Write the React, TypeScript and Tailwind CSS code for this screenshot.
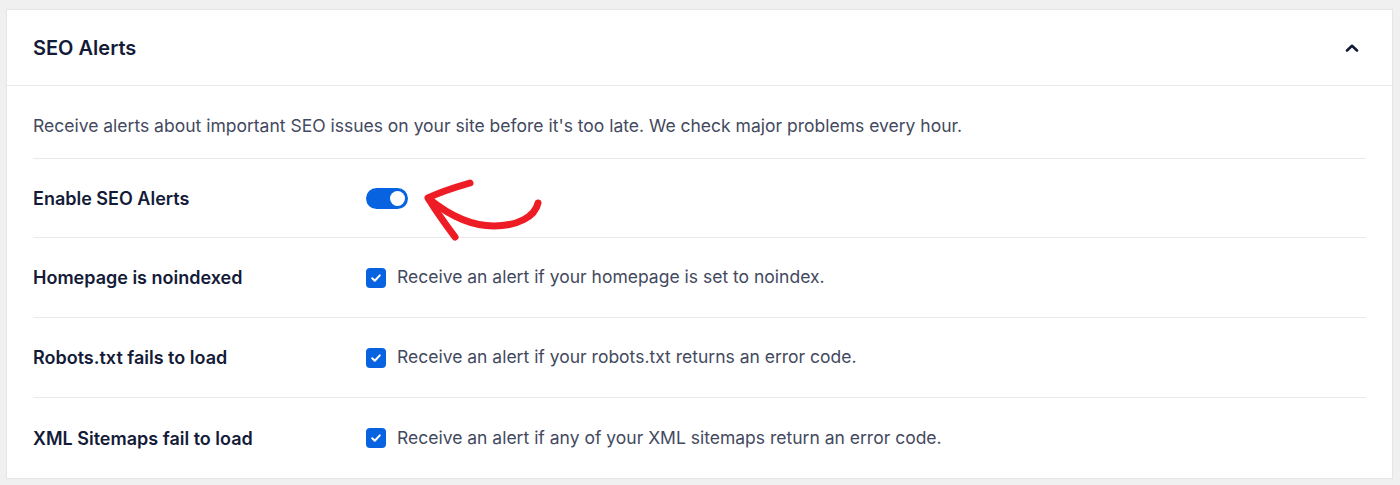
import React, { useState } from "react";

const font = { fontFamily: "Inter, 'Noto Sans', 'Liberation Sans', sans-serif" };

function Toggle({ on, onChange }: { on: boolean; onChange: () => void }) {
  return (
    <button
      type="button"
      onClick={onChange}
      className={`relative flex h-[21px] w-[42px] items-center rounded-full ${on ? "bg-[#0863e0]" : "bg-[#b6b9c4]"}`}
    >
      <span
        className={`absolute top-[3px] h-[15px] w-[15px] rounded-full bg-white ${on ? "left-[24px]" : "left-[3px]"}`}
      />
    </button>
  );
}

function Check({ checked, onChange }: { checked: boolean; onChange: () => void }) {
  return (
    <button
      type="button"
      onClick={onChange}
      className={`flex h-[20px] w-[20px] shrink-0 items-center justify-center rounded-[4px] ${checked ? "bg-[#0863e0]" : "border border-[#8c8f9a] bg-white"}`}
    >
      {checked && (
        <svg width="12" height="12" viewBox="0 0 12 12" fill="none">
          <path d="M2.2 6.3 L4.8 8.8 L9.8 3.4" stroke="white" strokeWidth="2" strokeLinecap="round" strokeLinejoin="round" />
        </svg>
      )}
    </button>
  );
}

// Hand-drawn red pointer next to the switch
function RedArrow() {
  return (
    <svg
      className="pointer-events-none absolute left-[54px] top-[-13px]"
      width="130"
      height="75"
      viewBox="0 0 130 75"
      fill="none"
    >
      <path
        d="M118 28 C 115 42, 97 51, 74 51 C 52 51, 30 41, 9 24"
        stroke="#ee1c24"
        strokeWidth="7"
        strokeLinecap="round"
        strokeLinejoin="round"
      />
      <path
        d="M50 8 C 36 12, 20 17, 8 23 C 16 36, 26 50, 35 62"
        stroke="#ee1c24"
        strokeWidth="7"
        strokeLinecap="round"
        strokeLinejoin="round"
      />
    </svg>
  );
}

export default function App() {
  const [enabled, setEnabled] = useState(true);
  const [checks, setChecks] = useState([true, true, true]);
  const [open, setOpen] = useState(true);

  const rows = [
    { label: "Homepage is noindexed", text: "Receive an alert if your homepage is set to noindex." },
    { label: "Robots.txt fails to load", text: "Receive an alert if your robots.txt returns an error code." },
    { label: "XML Sitemaps fail to load", text: "Receive an alert if any of your XML sitemaps return an error code." },
  ];

  return (
    <div className="min-h-[485px] w-[1400px] bg-[#f0f0f1] pl-[6px] pr-[7px] pt-[9px]" style={font}>
      <div className="border border-[#e4e5e9] bg-white">
        <div className="flex h-[76px] items-center justify-between border-b border-[#e8e9ec] pl-[26px] pr-[28px]">
          <h2 className="text-[20px] font-semibold text-[#141b38]">SEO Alerts</h2>
          <button type="button" onClick={() => setOpen(!open)} className="flex h-6 w-6 items-center justify-center">
            <svg width="16" height="16" viewBox="0 0 16 16" fill="none">
              <path
                d={open ? "M3 10.5 L8 5.8 L13 10.5" : "M3 5.8 L8 10.5 L13 5.8"}
                stroke="#141b38"
                strokeWidth="2.6"
                strokeLinecap="round"
                strokeLinejoin="round"
              />
            </svg>
          </button>
        </div>

        {open && (
          <div className="px-[26px]">
            <p className="border-b border-[#e8e9ec] pb-[20px] pt-[28px] text-[17.5px] leading-[24px] text-[#434960]">
              Receive alerts about important SEO issues on your site before it's too late. We check major problems every hour.
            </p>

            <div className="flex h-[79px] items-center border-b border-[#e8e9ec]">
              <div className="w-[333px] text-[18px] font-semibold text-[#141b38]">Enable SEO Alerts</div>
              <div className="relative flex items-center">
                <Toggle on={enabled} onChange={() => setEnabled(!enabled)} />
                <RedArrow />
              </div>
            </div>

            {rows.map((r, i) => (
              <div
                key={r.label}
                className={`flex h-[80px] items-center ${i < rows.length - 1 ? "border-b border-[#e8e9ec]" : ""}`}
              >
                <div className="w-[333px] text-[18px] font-semibold text-[#141b38]">{r.label}</div>
                <label className="flex items-center gap-[11px] text-[17.5px] text-[#434960]">
                  <Check
                    checked={checks[i]}
                    onChange={() => setChecks(checks.map((c, j) => (j === i ? !c : c)))}
                  />
                  <span>{r.text}</span>
                </label>
              </div>
            ))}
          </div>
        )}
      </div>
    </div>
  );
}
